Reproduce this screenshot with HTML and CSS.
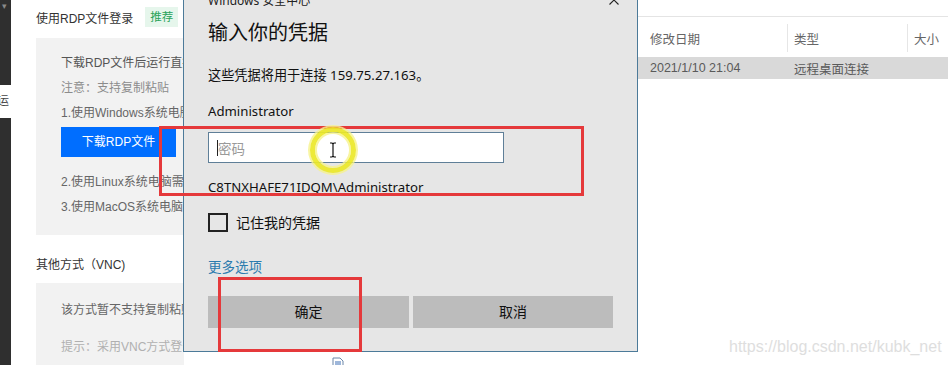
FILE: index.html
```html
<!DOCTYPE html>
<html lang="zh-CN">
<head>
<meta charset="utf-8">
<title>输入你的凭据</title>
<link rel="stylesheet" href="styles.css">
</head>
<body>
<div class="screen">
  <aside class="rail">
    <div class="rail-top">▾</div>
    <div class="rail-notch"><span>运</span></div>
    <div class="rail-rest"></div>
  </aside>

  <section class="panel">
    <div class="panel-head">
      <span>使用RDP文件登录</span>
      <span class="badge">推荐</span>
    </div>
    <div class="box">
      <p class="line dark">下载RDP文件后运行直接登录实例</p>
      <p class="line light">注意：支持复制粘贴</p>
      <p class="line">1.使用Windows系统电脑登录实例</p>
      <div class="btn-primary">下载RDP文件</div>
      <p class="line">2.使用Linux系统电脑需要安装远程桌面客户端</p>
      <p class="line">3.使用MacOS系统电脑需要安装远程桌面客户端</p>
    </div>
    <div class="panel-head second">其他方式（VNC)</div>
    <div class="box box-vnc">
      <p class="line">该方式暂不支持复制粘贴</p>
      <p class="line lighter">提示：采用VNC方式登录实例</p>
    </div>
  </section>

  <section class="explorer">
    <div class="exp-band"></div>
    <div class="exp-head">
      <span class="col col-date">修改日期</span>
      <span class="col col-type">类型</span>
      <span class="col col-size">大小</span>
    </div>
    <div class="exp-row">
      <span class="col col-date">2021/1/10 21:04</span>
      <span class="col col-type">远程桌面连接</span>
      <span class="col col-size"></span>
    </div>
  </section>

  <div class="dialog">
    <div class="dlg-title">
      <span>Windows 安全中心</span>
      <span class="dlg-close">
        <svg width="10" height="10" viewBox="0 0 10 10"><path d="M0.5 0.5L9.5 9.5M9.5 0.5L0.5 9.5" stroke="#222" stroke-width="1.1" fill="none"/></svg>
      </span>
    </div>
    <h1 class="dlg-heading">输入你的凭据</h1>
    <p class="dlg-text t-info">这些凭据将用于连接 159.75.27.163。</p>
    <p class="dlg-text t-user">Administrator</p>
    <div class="dlg-input"><span class="caret"></span><span class="placeholder">密码</span></div>
    <p class="dlg-text t-domain">C8TNXHAFE71IDQM\Administrator</p>
    <label class="dlg-check"><span class="box-check"></span><span>记住我的凭据</span></label>
    <a class="dlg-more">更多选项</a>
    <div class="dlg-buttons">
      <div class="dlg-btn">确定</div>
      <div class="dlg-btn">取消</div>
    </div>
  </div>

  <div class="mark mark-a"></div>
  <div class="mark mark-b"></div>

  <div class="cursor">
    <svg width="8" height="16" viewBox="0 0 8 16"><path d="M1 1H3L4 2L5 1H7M4 2V14M1 15H3L4 14L5 15H7" stroke="#111" stroke-width="1.2" fill="none"/></svg>
  </div>

  <div class="doc-icon">
    <svg width="14" height="12" viewBox="0 0 14 12"><path d="M2 1H9L12 4V12H2Z" fill="#fff" stroke="#6a86a8" stroke-width="1"/><path d="M4 5H10M4 7H10M4 9H10" stroke="#3d6fb5" stroke-width="1"/></svg>
  </div>

  <div class="watermark">https://blog.csdn.net/kubk_net</div>
</div>
</body>
</html>
```

FILE: styles.css
```css
* { box-sizing: border-box; margin: 0; padding: 0; }

body {
  width: 948px;
  height: 365px;
  overflow: hidden;
  background: #ffffff;
  font-family: "Liberation Sans", "Noto Sans CJK SC", sans-serif;
}

.screen {
  position: relative;
  display: flex;
  width: 948px;
  height: 365px;
  overflow: hidden;
}

/* left dark rail */
.rail {
  width: 11px;
  flex: none;
  display: flex;
  flex-direction: column;
  background: #2f2f2f;
}
.rail-top {
  height: 85px;
  color: #8a8a8a;
  font-size: 9px;
  line-height: 12px;
  padding-left: 2px;
}
.rail-notch {
  height: 33px;
  background: #ffffff;
  overflow: hidden;
  font-size: 12px;
  line-height: 33px;
  color: #444;
}
.rail-notch span { display: block; margin-left: -3px; }
.rail-rest { flex: 1; background: #2f2f2f; }

/* left console panel */
.panel {
  width: 627px;
  flex: none;
  padding: 7px 0 0 25px;
  background: #ffffff;
}
.panel-head {
  display: flex;
  align-items: center;
  height: 20px;
  font-size: 12px;
  color: #333;
}
.panel-head.second { margin-top: 18px; }
.badge {
  margin-left: 12px;
  height: 20px;
  padding: 0 5px;
  background: #e6f6ec;
  color: #29a35a;
  font-size: 11.5px;
  line-height: 20px;
}
.box {
  margin-top: 11px;
  width: 148px;
  overflow: hidden;
  background: #f2f2f2;
  padding: 13px 0 15px 25px;
}
.box-vnc { margin-top: 10px; padding-top: 15px; height: 120px; }
.box-vnc .lighter { margin-top: 12px; }
.line {
  font-size: 12px;
  line-height: 25px;
  color: #666;
  white-space: nowrap;
}
.line.dark { color: #555; }
.line.light { color: #8c8c8c; }
.line.lighter { color: #b0b0b0; }
.btn-primary {
  margin: 1px 0 13px;
  width: 115px;
  height: 30px;
  background: #006eff;
  color: #ffffff;
  font-size: 12px;
  line-height: 30px;
  text-align: center;
}

/* right explorer */
.explorer {
  flex: 1;
  background: #ffffff;
  color: #5a5a5a;
  font-size: 12.5px;
}
.exp-band {
  height: 17px;
  border-bottom: 1px solid #e4e4e4;
}
.exp-head {
  display: flex;
  margin-top: 7px;
  height: 28px;
  align-items: center;
  color: #666;
}
.exp-row {
  display: flex;
  margin-top: 5px;
  height: 22px;
  align-items: center;
  background: #d9d9d9;
}
.col { height: 100%; display: flex; align-items: center; white-space: nowrap; }
.col-date { width: 149px; padding-left: 12px; }
.col-type { width: 120px; padding-left: 7px; }
.col-size { flex: 1; padding-left: 7px; }
.exp-head .col-type,
.exp-head .col-size { border-left: 1px solid #e6e6e6; padding-left: 6px; }

/* credential dialog */
.dialog {
  position: absolute;
  left: 183px;
  top: -30px;
  width: 455px;
  height: 382px;
  background: #e6e6e6;
  border: 1px solid #4c7a99;
  padding: 21px 24px 0;
  font-family: "Noto Sans", "Noto Sans CJK SC", sans-serif;
  color: #1a1a1a;
}
.dlg-title {
  display: flex;
  justify-content: space-between;
  align-items: center;
  height: 16px;
  margin-right: -24px;
  font-size: 12px;
  color: #222;
}
.dlg-close {
  width: 46px;
  display: flex;
  justify-content: center;
  align-items: center;
}
.dlg-heading {
  margin-top: 11px;
  font-size: 20px;
  font-weight: normal;
  line-height: 28px;
  color: #111;
}
.dlg-text {
  font-size: 13.2px;
  line-height: 20px;
  color: #111;
  white-space: nowrap;
}
.t-info { margin-top: 18px; }
.t-user { margin-top: 16px; }
.t-domain { margin-top: 14px; }
.dlg-input {
  margin-top: 11px;
  width: 296px;
  height: 31px;
  background: #ffffff;
  border: 1px solid #5f7f98;
  display: flex;
  align-items: center;
  padding-left: 8px;
}
.caret {
  width: 1px;
  height: 16px;
  background: #222;
}
.placeholder {
  font-size: 13.5px;
  color: #9a9a9a;
}
.dlg-check {
  margin-top: 15px;
  height: 20px;
  display: flex;
  align-items: center;
  gap: 8px;
  font-size: 14px;
  color: #111;
}
.box-check {
  width: 20px;
  height: 19px;
  border: 2px solid #222;
  background: transparent;
}
.dlg-more {
  display: block;
  margin-top: 25px;
  font-size: 13.5px;
  line-height: 20px;
  color: #2b7bae;
}
.dlg-buttons {
  margin-top: 19px;
  display: flex;
  gap: 4px;
}
.dlg-btn {
  width: 201px;
  height: 32px;
  background: #bcbcbc;
  font-size: 14px;
  line-height: 32px;
  text-align: center;
  color: #111;
}
.dlg-btn + .dlg-btn { width: 200px; }

/* annotation overlays */
.mark {
  position: absolute;
  border: 3px solid #e5393b;
}
.mark-a { left: 159px; top: 126px; width: 425px; height: 70px; }
.mark-b { left: 218px; top: 277px; width: 144px; height: 75px; }

.cursor {
  position: absolute;
  left: 310px;
  top: 127px;
  width: 46px;
  height: 46px;
  border-radius: 50%;
  border: 5px solid rgba(236, 232, 40, 0.92);
  box-shadow: 0 0 0 2px rgba(246, 242, 140, 0.8), inset 0 0 0 2px rgba(246, 242, 140, 0.8);
  display: flex;
  align-items: center;
  justify-content: center;
}

.doc-icon {
  position: absolute;
  left: 331px;
  top: 355px;
}

.watermark {
  position: absolute;
  left: 729px;
  top: 337px;
  font-family: "Liberation Sans", sans-serif;
  font-size: 16px;
  line-height: 20px;
  color: #dedede;
  white-space: nowrap;
}
```
